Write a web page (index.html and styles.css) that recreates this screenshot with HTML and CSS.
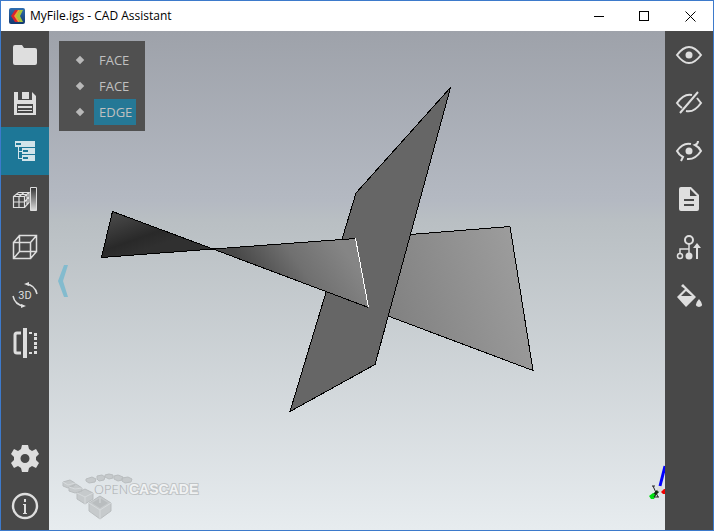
FILE: index.html
```html
<!DOCTYPE html>
<html lang="en">
<head>
<meta charset="utf-8">
<title>MyFile.igs - CAD Assistant</title>
<meta name="viewport" content="width=device-width, initial-scale=1">
<link rel="stylesheet" href="styles.css">
</head>
<body>
<div class="window">
  <header class="titlebar">
    <svg class="app-icon" viewBox="0 0 16 16" aria-hidden="true">
      <defs><linearGradient id="app" x2="0" y2="1"><stop stop-color="#2f6eb0"/><stop offset="1" stop-color="#12386f"/></linearGradient></defs>
      <rect width="16" height="16" rx="2" fill="url(#app)"/>
      <path d="M6 2h3L7 8l2 6H6L2 8z" fill="#d8232f"/>
      <path d="M9 2h2L8 8l3 6H9L5 8z" fill="#f0a030"/>
      <path d="M11 2h3l-3 6 3 6h-3L7 8z" fill="#a5c63b"/>
    </svg>
    <h1 class="title">MyFile.igs - CAD Assistant</h1>
    <div class="caption-buttons">
      <button class="caption" aria-label="Minimize"><svg viewBox="0 0 11 11"><path d="M1 5.500h10"/></svg></button>
      <button class="caption" aria-label="Maximize"><svg viewBox="0 0 11 11"><path d="M.5.5h9v9h-9z"/></svg></button>
      <button class="caption caption-close" aria-label="Close"><svg viewBox="0 0 11 11"><path d="M.5.5l10 10M10.500.5l-10 10"/></svg></button>
    </div>
  </header>

  <div class="workspace">
    <nav class="toolbar" aria-label="Main tools">
      <button class="tool" aria-label="Open"><svg viewBox="0 0 48 48"><path class="solid" d="M14 14h7l2 3h11q2 0 2 2v13q0 2-2 2H14q-2 0-2-2V16q0-2 2-2z"/></svg></button>
      <button class="tool" aria-label="Save"><svg viewBox="0 0 48 48"><path class="solid" fill-rule="evenodd" d="M13 13h4v8h14v-8l4 4v19H13zM16 25v9h16v-9zM21 13h7v7h-7z"/><path class="solid" d="M22 14h4v5h-4zM17 27h14v2H17zM17 31h14v1H17z"/></svg></button>
      <button class="tool tool-active" aria-label="Model tree" aria-pressed="true"><svg viewBox="0 0 48 48"><path class="pale" fill-rule="evenodd" d="M14 14h20v6H14zM15 16v2h5v-2zM21 21h13v6H21zM22 23v2h5v-2zM21 28h13v6H21zM22 30v2h5v-2z"/><path class="pale" d="M17 20h1v4h3v1h-3v6h3v1h-4z"/></svg></button>
      <button class="tool" aria-label="Mesh display"><svg viewBox="0 0 48 48">
        <defs><linearGradient id="scale" x2="0" y2="1"><stop stop-color="#333"/><stop offset="1" stop-color="#ddd"/></linearGradient></defs>
        <path class="line mesh" d="M12.500 21.500h11v11h-11zM18 21.500v11M12.500 27h11M12.500 21.500l5-4h10.500l-4.500 4M28 17.500v10l-4.500 5M15 19.500h11v10M18 21.500l5-4M23.500 27l4.500-5"/>
        <path class="line thin ramp" d="M29.500 12.500h6v23h-6z"/></svg></button>
      <button class="tool" aria-label="Projection"><svg viewBox="0 0 48 48"><path class="line" d="M12.500 19.500h17v16h-17zM18.500 12.500h17v16h-17zM12.500 19.500l6-7M29.500 19.500l6-7M29.500 35.500l6-7M12.500 35.500l6-7"/></svg></button>
      <button class="tool" aria-label="Rotate 3D"><svg viewBox="0 0 48 48"><path class="line" d="M25 13q9 1 11 10M12 25q2 9 11 10"/><path class="solid" d="M23 13l5-2v4zM25 35l-5-2v4z"/><text class="tool-text" x="24" y="28" text-anchor="middle">3D</text></svg></button>
      <button class="tool" aria-label="Clipping plane"><svg viewBox="0 0 48 48"><path class="line thick" d="M20 14h-4q-2 0-2 2v16q0 2 2 2h4"/><path class="solid" d="M22 9h4v30h-4zM28 13h3v2h-3zM28 33h3v2h-3zM33 14h3v3h-3zM33 18h3v3h-3zM33 23h3v3h-3zM33 27h3v3h-3zM33 32h3v3h-3z"/></svg></button>
      <button class="tool tool-bottom" aria-label="Settings"><svg viewBox="0 0 48 48"><path class="solid" fill-rule="evenodd" d="M21 11h6l1 4 3 2 4-2 3 5-3 3v3l3 3-3 5-4-2-3 2-1 4h-6l-1-4-3-2-4 2-3-5 3-3v-3l-3-3 3-5 4 2 3-2zM24 20a4.500 4.500 0 1 0 0 9 4.500 4.500 0 1 0 0-9z"/></svg></button>
      <button class="tool" aria-label="About"><svg viewBox="0 0 48 48"><circle class="line ring" cx="24" cy="24" r="12"/><path class="solid" d="M23 17h2v3h-2zM22 22h3v9h1v1h-4v-1h1v-8h-1z"/></svg></button>
    </nav>

    <main class="viewport">
      <svg class="scene" viewBox="49 31 616 499" role="img" aria-label="Intersecting surfaces">
        <defs>
          <linearGradient id="dark" gradientUnits="userSpaceOnUse" x1="125" y1="210" x2="140" y2="252"><stop stop-color="#494949"/><stop offset=".7" stop-color="#292929"/><stop offset="1" stop-color="#303030"/></linearGradient>
          <linearGradient id="mid" gradientUnits="userSpaceOnUse" x1="250" y1="275" x2="325" y2="222"><stop stop-color="#484848"/><stop offset=".5" stop-color="#707070"/><stop offset="1" stop-color="#858585"/></linearGradient>
          <linearGradient id="light" gradientUnits="userSpaceOnUse" x1="385" y1="290" x2="520" y2="245"><stop stop-color="#828282"/><stop offset="1" stop-color="#9d9d9d"/></linearGradient>
        </defs>
        <path fill="url(#light)" d="M410 234.500L510 226.500L533 370.500L388 316z"/>
        <path class="edge" d="M410 234.500L510 226.500L533 370.500L388 316"/>
        <path class="edge" fill="#666" d="M450.500 87.500L356 193L290 411.500L375 364.500z"/>
        <path class="edge" fill="url(#dark)" d="M112.500 211.500L213 249L101.500 257.500z"/>
        <path fill="url(#mid)" d="M213 249L355.500 238.500L368.500 307.500z"/>
        <path class="edge" d="M355.500 238.500L213 249L368.500 307.500"/>
        <path class="edge picked" d="M355.500 238.500L368.500 307.500"/>
      </svg>

      <ul class="tree">
        <li class="tree-row"><span class="bullet"></span><span class="label">FACE</span></li>
        <li class="tree-row"><span class="bullet"></span><span class="label">FACE</span></li>
        <li class="tree-row"><span class="bullet"></span><span class="label label-selected">EDGE</span></li>
      </ul>

      <button class="collapse" aria-label="Collapse panel"><svg viewBox="0 0 12 34"><path d="M7 1h4L6 17l5 16H7L1 17z"/></svg></button>

      <svg class="brand" viewBox="0 0 140 50" role="img" aria-label="Open Cascade">
        <g class="boxes">
          <path d="M25 7l6-2 4 2-1 3-6 1-3-2zM36 4l5-1 3 2-1 3-5 1-2-2zM44 3l4-1 4 1v3l-4 1-4-2zM53 4l4-1 5 2-1 3-4 1-4-2zM61 6l6-1 4 2-1 3-6 1-3-2z"/>
          <path d="M2 10l7-2 5 3-1 3-6 2-5-2zM8 15l7-3 6 4v3l-7 2-6-2zM16 21l8-4 8 4v6l-8 5-8-5z"/>
          <path d="M28 31l11-7 11 7v8l-11 8-11-8z"/>
        </g>
        <path class="box-well" d="M31 31l8-5 8 5-8 5z"/>
        <path class="box-shade" d="M2 10l5 3 7-2M8 15l6 2 7-1M16 21l8 4 8-4M24 25v7M28 31l11 7 11-7M39 38v9M39 26v5"/>
        <text class="brand-thin" x="33" y="22">OPEN</text>
        <text class="brand-bold" x="68" y="22">CASCADE</text>
      </svg>

      <svg class="triad" viewBox="0 0 20 36" aria-hidden="true">
        <path d="M20 2L15 22" stroke="#00f" stroke-width="3"/>
        <path d="M15 25L9 31" stroke="#063906" stroke-width="3"/>
        <path d="M4 32l4-3 3 2-2 4H6z" fill="#0d1"/>
        <path d="M7 22h3M8 22l5 11M16 22L9 33M9 33h5" stroke="#222"/>
        <circle cx="15" cy="25" r="3" fill="#ddd"/>
        <path d="M16 28l3-3h1v5h-2z" fill="#f20000"/>
      </svg>
    </main>

    <nav class="toolbar" aria-label="Object tools">
      <button class="tool" aria-label="Show"><svg viewBox="0 0 48 48"><path class="line eye" d="M12 24q12-16 24 0q-12 16-24 0z"/><circle class="solid" cx="24" cy="24" r="3.500"/></svg></button>
      <button class="tool" aria-label="Hide"><svg viewBox="0 0 48 48"><path class="line eye" d="M27 16q-8-2-15 8q2 3 5 5M32 19l4 5q-7 10-15 8M33 13L15 34"/></svg></button>
      <button class="tool" aria-label="Show only"><svg viewBox="0 0 48 48"><path class="line eye" d="M26 17q-8-2-14 7q2 4 6 6l-2 4M22 32q8 1 14-8q-2-4-6-6q3-1 3-4"/><circle class="solid" cx="24" cy="24" r="3.500"/></svg></button>
      <button class="tool" aria-label="Properties"><svg viewBox="0 0 48 48"><path class="solid" fill-rule="evenodd" d="M16 12h10l8 8v14q0 2-2 2H16q-2 0-2-2V14q0-2 2-2zM25 14v7h7zM19 24v2h10v-2zM19 29v2h10v-2z"/></svg></button>
      <button class="tool" aria-label="Select parent"><svg viewBox="0 0 48 48"><path class="line" d="M24 21v9M15 30v-4h9"/><circle class="line eye" cx="24" cy="17" r="4"/><circle class="line" cx="15" cy="33" r="2.500"/><circle class="solid" cx="24" cy="33" r="3.500"/><path class="solid" d="M32 20l4 5h-3v11h-2V25h-3z"/></svg></button>
      <button class="tool" aria-label="Color"><svg viewBox="0 0 48 48"><path class="solid" fill-rule="evenodd" d="M18 13l13 13-10 10-9-10 8-8-4-3zM21 20l-5 5h11zM34 28q6 7 0 8q-6-1 0-8z"/></svg></button>
    </nav>
  </div>
</div>
</body>
</html>
```
FILE: styles.css
```css
* { box-sizing: border-box; }

body {
  margin: 0;
  font-family: "Open Sans", "Noto Sans", sans-serif;
}

button {
  margin: 0;
  padding: 0;
  border: 0;
  background: none;
}

svg { display: block; }

.window {
  display: flex;
  flex-direction: column;
  height: 100vh;
  border: 1px solid #3d7acb;
}

.titlebar {
  display: flex;
  align-items: center;
  flex: 0 0 30px;
  padding-left: 8px;
  background: #fff;
}

.app-icon { width: 16px; height: 16px; }

.title {
  flex: 1;
  margin: 0 0 0 5px;
  font-size: 12px;
  font-weight: 400;
  line-height: 16px;
  color: #000;
}

.caption-buttons { display: flex; }

.caption {
  display: grid;
  place-items: center;
  width: 46px;
  height: 30px;
}

.caption svg {
  width: 11px;
  height: 11px;
  fill: none;
  stroke: #000;
  shape-rendering: crispEdges;
}

.caption-close svg { shape-rendering: auto; }

.workspace {
  display: flex;
  flex: 1;
  min-height: 0;
}

.toolbar {
  display: flex;
  flex-direction: column;
  flex: 0 0 48px;
  background: #484848;
}

.tool { height: 48px; }
.tool svg { width: 48px; height: 48px; }
.tool-active { background: #1d7797; }
.tool-bottom { margin-top: auto; }

.solid { fill: #dedede; }
.pale { fill: #d2e4ea; }
.line { fill: none; stroke: #dedede; stroke-width: 1.500; }
.thin { stroke-width: 1; }
.mesh { stroke-width: 1.200; }
.eye { stroke-width: 2; }
.ring { stroke-width: 2.400; }
.thick { stroke-width: 3; }
.ramp { fill: url(#scale); }

.tool-text {
  font: 400 11px Roboto, sans-serif;
  fill: #dedede;
}

.viewport {
  position: relative;
  flex: 1;
  min-width: 0;
  overflow: hidden;
  background: linear-gradient(#9ea2aa 0%, #b4b9c2 34%, #b9bfc3 38%, #e7ecef 100%);
}

.scene {
  width: 100%;
  height: 100%;
}

.edge {
  stroke: #000;
  stroke-width: 1;
  shape-rendering: crispEdges;
}

.edge:not([fill]) { fill: none; }
.edge.picked { stroke: #fff; }

.tree {
  position: absolute;
  top: 10px;
  left: 10px;
  margin: 0;
  padding: 6px 9px 6px 18px;
  list-style: none;
  background: #505050;
}

.tree-row {
  display: flex;
  align-items: center;
  gap: 11px;
  height: 26px;
}

.bullet {
  width: 6px;
  height: 6px;
  background: #b8b8b8;
  transform: rotate(45deg);
}

.label {
  min-width: 42px;
  padding: 0 4px 0 5px;
  font-size: 13px;
  line-height: 26px;
  color: #c0c0c0;
}

.label-selected { background: #257896; }

.collapse {
  position: absolute;
  top: 50%;
  left: 8px;
  transform: translateY(-50%);
}

.collapse svg {
  width: 12px;
  height: 34px;
  fill: #83bbce;
}

.brand {
  position: absolute;
  left: 12px;
  bottom: 8px;
  width: 140px;
  height: 50px;
}

.boxes { fill: #c6cacc; stroke: #b9bdbf; }
.box-well { fill: #b9bdbf; }
.box-shade { fill: none; stroke: #d6dadc; }

.brand-thin {
  font: 300 13px "Open Sans", sans-serif;
  fill: #a9adaf;
}

.brand-bold {
  font: 700 14px "Liberation Sans", sans-serif;
  fill: #f0f2f3;
  stroke: #c0c4c6;
  stroke-width: 2;
  paint-order: stroke;
}

.triad {
  position: absolute;
  right: 0;
  bottom: 30px;
  width: 20px;
  height: 36px;
  fill: none;
}
```
